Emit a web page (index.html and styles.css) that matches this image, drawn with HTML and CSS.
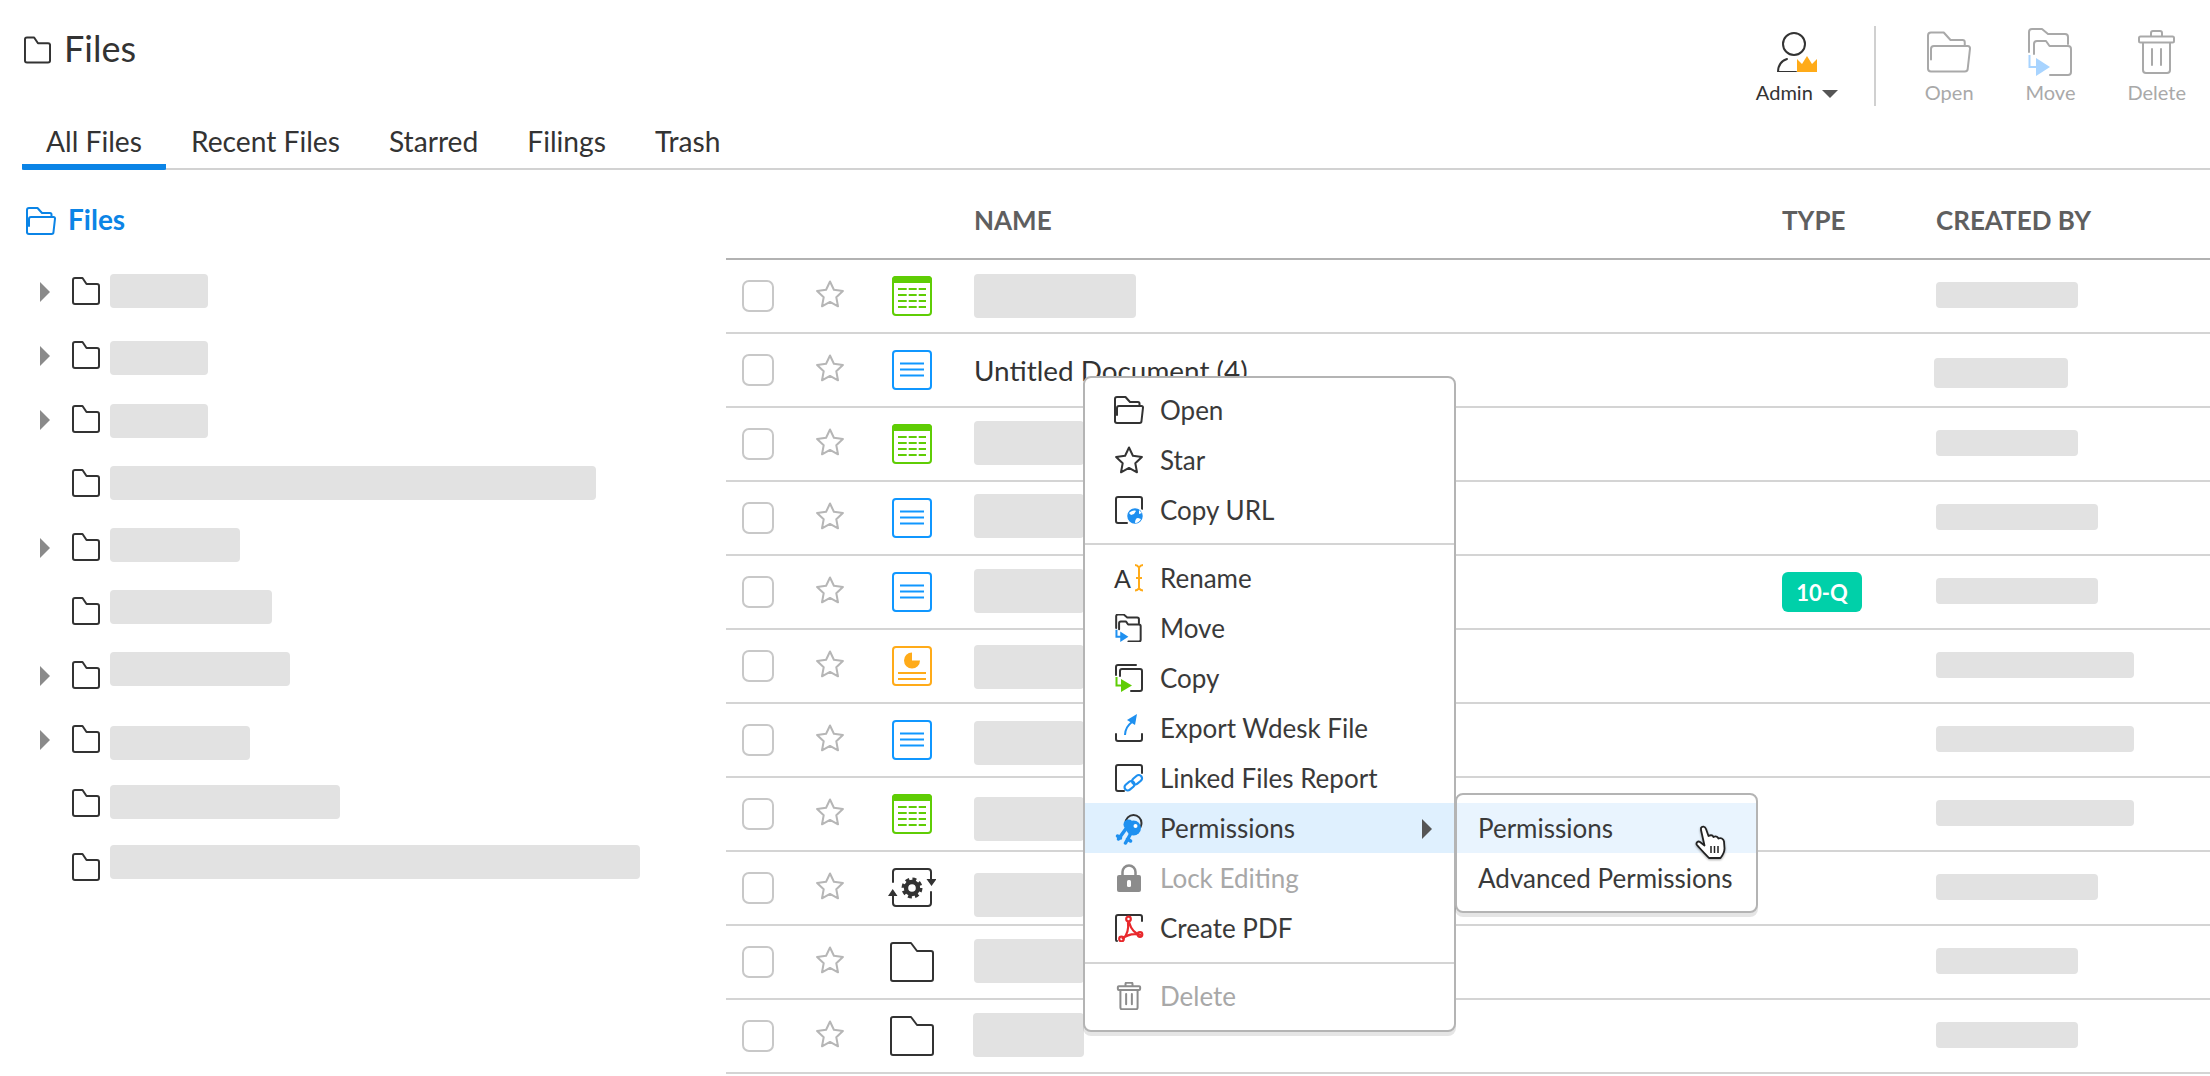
FILE: index.html
```html
<!DOCTYPE html>
<html lang="en">
<head>
<meta charset="utf-8">
<title>Files</title>
<link rel="stylesheet" href="styles.css">
</head>
<body>
<svg class="defs" width="0" height="0" aria-hidden="true">
  <symbol id="i-folder" viewBox="0 0 28 28"><path class="ln" d="M3 1h7.500l4 6H25a2 2 0 0 1 2 2v16a2 2 0 0 1-2 2H3a2 2 0 0 1-2-2V3a2 2 0 0 1 2-2z"/></symbol>
  <symbol id="i-folder-lg" viewBox="0 0 44 40"><path class="ln" d="M3 1h18l6 8h14a2 2 0 0 1 2 2v26a2 2 0 0 1-2 2H3a2 2 0 0 1-2-2V3a2 2 0 0 1 2-2z"/></symbol>
  <symbol id="i-open" viewBox="0 0 30 28"><path class="ln" d="M1 25V3a2 2 0 0 1 2-2h8.500l4.500 5h8a1.500 1.500 0 0 1 1.500 1.500V10"/><path class="ln" d="M3 19v-7a2 2 0 0 1 2-2h22.500a1.500 1.500 0 0 1 1.500 1.700L27.500 25a2 2 0 0 1-2 2H3a2 2 0 0 1-2-2"/></symbol>
  <symbol id="i-star" viewBox="0 0 28 28"><path class="ln" d="M14 1.500l3.900 8.300 9 1.200-6.600 6.300 1.700 9-8-4.400-8 4.400 1.700-9L1.100 11l9-1.200z"/></symbol>
  <symbol id="i-sheet" viewBox="0 0 40 40"><rect class="tint" x="1" y="1" width="38" height="38" rx="3"/><path class="tintfill" d="M4 0h32a4 4 0 0 1 4 4v3H0V4a4 4 0 0 1 4-4z"/><path class="tint" d="M6 13h8.700M16.700 13h8M26.700 13h7.300M6 19h8.700M16.700 19h8M26.700 19h7.300M6 25h8.700M16.700 25h8M26.700 25h7.300M6 31h8.700M16.700 31h8M26.700 31h7.300"/></symbol>
  <symbol id="i-doc" viewBox="0 0 40 40"><rect class="tint" x="1" y="1" width="38" height="38" rx="3"/><path class="tint" d="M8 13.500h24M8 19.500h24M8 25.500h24"/></symbol>
  <symbol id="i-ppt" viewBox="0 0 40 40"><rect class="tint" x="1" y="1" width="38" height="38" rx="3"/><path class="tintfill" d="M20 6.500a8 8 0 1 0 8 8h-8z"/><path class="tint" d="M6 27h28M6 33h28"/></symbol>
  <symbol id="i-sync" viewBox="0 0 48 40"><path class="ln" d="M5 14V4a3 3 0 0 1 3-3h32a3 3 0 0 1 3 3v7"/><path class="ln" d="M43 24v11a3 3 0 0 1-3 3H8a3 3 0 0 1-3-3V28"/><path class="dark" d="M38.500 11h10L43.500 18zM0 28h9.500L4.700 21z"/><circle class="gearteeth" cx="24" cy="20" r="8.500"/><circle class="gearring" cx="24" cy="20" r="6"/></symbol>
  <symbol id="i-admin" viewBox="0 0 40 40"><circle class="ln" cx="17" cy="12" r="11"/><path class="ln" d="M1 40c0-7 3-11 9-13M1 40h18"/><path class="crown" d="M20 40V27l5 5 5-8 5 8 5-5v13z"/></symbol>
  <symbol id="i-move" viewBox="0 0 46 48"><path class="ln" d="M1 24V4a3 3 0 0 1 3-3h10l6 5h17a3 3 0 0 1 3 3v7"/><path class="ln" d="M6 26V16a3 3 0 0 1 3-3h9l3.500 5H40a3 3 0 0 1 3 3v23a3 3 0 0 1-3 3H22"/><path class="accentln" d="M1.500 27v12h8"/><path class="accent" d="M8 30l14 9-14 9z"/></symbol>
  <symbol id="i-trash" viewBox="0 0 37 44"><path class="ln" d="M13 6V3a2 2 0 0 1 2-2h7a2 2 0 0 1 2 2v3"/><rect class="ln" x="1" y="6.500" width="35" height="6" rx="1.500"/><path class="ln" d="M5 13v27a3 3 0 0 0 3 3h21a3 3 0 0 0 3-3V13M14 19v16M23 19v16"/></symbol>
  <symbol id="i-url" viewBox="0 0 28 28"><path class="ln" d="M12 27H3a2 2 0 0 1-2-2V3a2 2 0 0 1 2-2h22a2 2 0 0 1 2 2v10"/><circle class="globe" cx="20" cy="20" r="8.500"/><path class="globe-land" d="M14 17c2-2 5-3 7-2l-2 3-3 1zM20 27c0-3 1-5 3-5l3 1c-1 2-3 4-6 4zM24 14l3 3-3 1z"/></symbol>
  <symbol id="i-copy" viewBox="0 0 28 28"><path class="ln" d="M1 11V3a2 2 0 0 1 2-2h18"/><path class="ln" d="M5 12V7a2 2 0 0 1 2-2h18a2 2 0 0 1 2 2v18a2 2 0 0 1-2 2H16"/><path class="accentln" d="M1.500 13v8.500H8"/><path class="accent" d="M6 15l11 6.500L6 28z"/></symbol>
  <symbol id="i-export" viewBox="0 0 28 28"><path class="ln" d="M1 20v5a2 2 0 0 0 2 2h22a2 2 0 0 0 2-2v-5"/><path class="accentln" d="M10 21c0-6 3-10 7-13"/><path class="accent" d="M12 6l10-6-2 11z"/></symbol>
  <symbol id="i-link" viewBox="0 0 28 28"><path class="ln" d="M9 27H3a2 2 0 0 1-2-2V3a2 2 0 0 1 2-2h22a2 2 0 0 1 2 2v6"/><g class="chain"><rect x="9" y="18.500" width="11" height="6.500" rx="3.200" transform="rotate(-40 14.500 21.700)"/><rect x="16.500" y="12.500" width="11" height="6.500" rx="3.200" transform="rotate(-40 22 15.700)"/></g></symbol>
  <symbol id="i-keys" viewBox="0 0 27 31"><path class="ln" d="M10 9a8 8 0 0 1 16 0c0 2-.5 3-1 4"/><path class="keyline" d="M11 14L3 25M2 22l3 2"/><circle class="keyblue" cx="13" cy="10.500" r="5"/><path class="keyline" d="M15 20l-5 9M12 25l3 2"/><circle class="keyblue" cx="18" cy="14" r="7.500"/><circle class="keyhole" cx="20" cy="12" r="2"/></symbol>
  <symbol id="i-lock" viewBox="0 0 24 28"><path class="lockarc" d="M5.500 13V8a6.500 6.500 0 0 1 13 0v5"/><rect class="lockbody" x="0" y="11" width="24" height="17" rx="2"/><rect class="keyhole" x="10" y="16" width="4" height="7" rx="1.500"/></symbol>
  <symbol id="i-pdf" viewBox="0 0 28 28"><path class="ln" d="M2 27c-.7 0-1-.5-1-1V3a2 2 0 0 1 2-2h22a2 2 0 0 1 2 2v4"/><g class="redline"><path d="M13 8c1 8-1 13-5 17M7 25c6-5 12-6 19-4M26 21c-6-1-10-6-12-13"/><circle cx="13.500" cy="5" r="2.300"/><circle cx="6.500" cy="25" r="2.300"/><circle cx="25" cy="20.500" r="2.300"/></g></symbol>
  <symbol id="i-ibeam" viewBox="0 0 10 28"><path class="cursor-i" d="M1 1c2 0 3 1 4 2.500C6 2 7 1 9 1M5 3.500v21M1 26.500c2 0 3-1 4-2 1 1 2 2 4 2M2 14h6"/></symbol>
</svg>

<header class="topbar">
  <h1 class="title"><svg class="ic-title"><use href="#i-folder"/></svg>Files</h1>
  <div class="actions">
    <div class="action admin">
      <div class="action-icon"><svg class="ic-admin"><use href="#i-admin"/></svg></div>
      <div class="action-label">Admin<span class="caret"></span></div>
    </div>
    <div class="vdiv"></div>
    <div class="action off">
      <div class="action-icon"><svg class="ic-open-lg"><use href="#i-open"/></svg></div>
      <div class="action-label">Open</div>
    </div>
    <div class="action off move-soft">
      <div class="action-icon"><svg class="ic-move-lg"><use href="#i-move"/></svg></div>
      <div class="action-label">Move</div>
    </div>
    <div class="action off">
      <div class="action-icon"><svg class="ic-trash-lg"><use href="#i-trash"/></svg></div>
      <div class="action-label">Delete</div>
    </div>
  </div>
</header>

<nav class="tabs">
  <a class="tab active">All Files</a>
  <a class="tab">Recent Files</a>
  <a class="tab">Starred</a>
  <a class="tab">Filings</a>
  <a class="tab">Trash</a>
</nav>

<main class="main">
  <aside class="tree">
    <div class="tree-head"><svg class="ic-tree-open"><use href="#i-open"/></svg>Files</div>
    <div class="tree-row"><span class="tri"></span><svg class="ic-tree"><use href="#i-folder"/></svg><span class="mask" style="width:98px;margin-top:15px"></span></div>
    <div class="tree-row"><span class="tri"></span><svg class="ic-tree"><use href="#i-folder"/></svg><span class="mask" style="width:98px;margin-top:18px"></span></div>
    <div class="tree-row"><span class="tri"></span><svg class="ic-tree"><use href="#i-folder"/></svg><span class="mask" style="width:98px;margin-top:17px"></span></div>
    <div class="tree-row"><span class="tri blank"></span><svg class="ic-tree"><use href="#i-folder"/></svg><span class="mask" style="width:486px;margin-top:15px"></span></div>
    <div class="tree-row"><span class="tri"></span><svg class="ic-tree"><use href="#i-folder"/></svg><span class="mask" style="width:130px;margin-top:13px"></span></div>
    <div class="tree-row"><span class="tri blank"></span><svg class="ic-tree"><use href="#i-folder"/></svg><span class="mask" style="width:162px;margin-top:11px"></span></div>
    <div class="tree-row"><span class="tri"></span><svg class="ic-tree"><use href="#i-folder"/></svg><span class="mask" style="width:180px;margin-top:9px"></span></div>
    <div class="tree-row"><span class="tri"></span><svg class="ic-tree"><use href="#i-folder"/></svg><span class="mask" style="width:140px;margin-top:19px"></span></div>
    <div class="tree-row"><span class="tri blank"></span><svg class="ic-tree"><use href="#i-folder"/></svg><span class="mask" style="width:230px;margin-top:14px"></span></div>
    <div class="tree-row"><span class="tri blank"></span><svg class="ic-tree"><use href="#i-folder"/></svg><span class="mask" style="width:530px;margin-top:10px"></span></div>
  </aside>

  <section class="table">
    <div class="thead">
      <span></span><span></span><span></span>
      <span>NAME</span><span>TYPE</span><span>CREATED BY</span>
    </div>

    <div class="row">
      <span class="check"></span><svg class="star"><use href="#i-star"/></svg><svg class="file sheet"><use href="#i-sheet"/></svg>
      <span class="cell-name"><span class="mask name" style="width:162px"></span></span><span></span>
      <span class="mask by" style="width:142px"></span>
    </div>
    <div class="row">
      <span class="check"></span><svg class="star"><use href="#i-star"/></svg><svg class="file doc"><use href="#i-doc"/></svg>
      <span class="cell-name"><span class="name-text">Untitled Document (4)</span></span><span></span>
      <span class="mask by by-alt" style="width:134px"></span>
    </div>
    <div class="row">
      <span class="check"></span><svg class="star"><use href="#i-star"/></svg><svg class="file sheet"><use href="#i-sheet"/></svg>
      <span class="cell-name"><span class="mask name" style="width:110px;margin-top:-2px"></span></span><span></span>
      <span class="mask by" style="width:142px"></span>
    </div>
    <div class="row">
      <span class="check"></span><svg class="star"><use href="#i-star"/></svg><svg class="file doc"><use href="#i-doc"/></svg>
      <span class="cell-name"><span class="mask name" style="width:110px;margin-top:-4px"></span></span><span></span>
      <span class="mask by" style="width:162px"></span>
    </div>
    <div class="row">
      <span class="check"></span><svg class="star"><use href="#i-star"/></svg><svg class="file doc"><use href="#i-doc"/></svg>
      <span class="cell-name"><span class="mask name" style="width:110px;margin-top:-2px"></span></span><span class="badge">10-Q</span>
      <span class="mask by" style="width:162px"></span>
    </div>
    <div class="row">
      <span class="check"></span><svg class="star"><use href="#i-star"/></svg><svg class="file ppt"><use href="#i-ppt"/></svg>
      <span class="cell-name"><span class="mask name" style="width:110px;margin-top:2px"></span></span><span></span>
      <span class="mask by" style="width:198px"></span>
    </div>
    <div class="row">
      <span class="check"></span><svg class="star"><use href="#i-star"/></svg><svg class="file doc"><use href="#i-doc"/></svg>
      <span class="cell-name"><span class="mask name" style="width:110px;margin-top:6px"></span></span><span></span>
      <span class="mask by" style="width:198px"></span>
    </div>
    <div class="row">
      <span class="check"></span><svg class="star"><use href="#i-star"/></svg><svg class="file sheet"><use href="#i-sheet"/></svg>
      <span class="cell-name"><span class="mask name" style="width:110px;margin-top:10px"></span></span><span></span>
      <span class="mask by" style="width:198px"></span>
    </div>
    <div class="row">
      <span class="check"></span><svg class="star"><use href="#i-star"/></svg><svg class="file sync"><use href="#i-sync"/></svg>
      <span class="cell-name"><span class="mask name" style="width:110px;margin-top:14px"></span></span><span></span>
      <span class="mask by" style="width:162px"></span>
    </div>
    <div class="row">
      <span class="check"></span><svg class="star"><use href="#i-star"/></svg><svg class="file folder-lg"><use href="#i-folder-lg"/></svg>
      <span class="cell-name"><span class="mask name" style="width:110px;margin-top:-2px"></span></span><span></span>
      <span class="mask by" style="width:142px"></span>
    </div>
    <div class="row last">
      <span class="check"></span><svg class="star"><use href="#i-star"/></svg><svg class="file folder-lg"><use href="#i-folder-lg"/></svg>
      <span class="cell-name"><span class="mask name name-shift" style="width:111px;margin-top:-2px"></span></span><span></span>
      <span class="mask by" style="width:142px"></span>
    </div>
  </section>
</main>

<div class="menu">
  <div class="mi"><svg class="mic"><use href="#i-open"/></svg>Open</div>
  <div class="mi"><svg class="mic"><use href="#i-star"/></svg>Star</div>
  <div class="mi"><svg class="mic blue"><use href="#i-url"/></svg>Copy URL</div>
  <div class="msep"></div>
  <div class="mi"><span class="mic rename"><span class="rename-a">A</span><svg class="ibeam"><use href="#i-ibeam"/></svg></span>Rename</div>
  <div class="mi"><svg class="mic blue"><use href="#i-move"/></svg>Move</div>
  <div class="mi"><svg class="mic green"><use href="#i-copy"/></svg>Copy</div>
  <div class="mi"><svg class="mic blue"><use href="#i-export"/></svg>Export Wdesk File</div>
  <div class="mi"><svg class="mic blue"><use href="#i-link"/></svg>Linked Files Report</div>
  <div class="mi hot"><svg class="mic keys"><use href="#i-keys"/></svg>Permissions<span class="tri-right"></span>
    <div class="submenu">
      <div class="smi hot2">Permissions<svg class="hand" viewBox="0 0 31 34"><path class="hand-fill" d="M6 3c1-2 4-2 5 1l2.500 7c2-1 4-1 5 1 2-1 4-.5 5 1.500 2-1 5 0 5.500 3l.5 7c0 4-2 7-4 9.500H14c-3-3.500-8-8-12-13-1.500-2 1-4.500 3-3l4.500 3.500L6 5z"/><path class="hand-line" d="M16 21v7M19.500 21v7M23 21v7"/></svg></div>
      <div class="smi">Advanced Permissions</div>
    </div>
  </div>
  <div class="mi dim"><svg class="mic lock"><use href="#i-lock"/></svg>Lock Editing</div>
  <div class="mi"><svg class="mic"><use href="#i-pdf"/></svg>Create PDF</div>
  <div class="msep sep2"></div>
  <div class="mi dim"><svg class="mic gray"><use href="#i-trash"/></svg>Delete</div>
</div>
</body>
</html>
```

FILE: styles.css
```css
* { box-sizing: border-box; }
html, body { margin: 0; height: 100%; }
body {
  position: relative;
  width: 2210px;
  height: 1076px;
  overflow: hidden;
  background: #fff;
  color: #333;
  font-family: Lato, "Open Sans", sans-serif;
}
.defs { position: absolute; }

/* icon parts */
.ln { fill: none; stroke: currentColor; stroke-width: 2; stroke-linejoin: round; stroke-linecap: round; vector-effect: non-scaling-stroke; }
.tint { fill: none; stroke: var(--tint); stroke-width: 2; }
.tintfill { fill: var(--tint); }
.dark { fill: #333; }
.gearteeth { fill: none; stroke: #333; stroke-width: 4; stroke-dasharray: 3.700 3; }
.gearring { fill: none; stroke: #333; stroke-width: 4.400; }
.crown { fill: #ffab19; }
.accent { fill: var(--accent, #1e90f0); }
.accentln { fill: none; stroke: var(--accent, #1e90f0); stroke-width: 2; vector-effect: non-scaling-stroke; }
.globe { fill: #1e8ff0; stroke: #fff; stroke-width: 1.500; }
.globe-land { fill: #fff; }
.cursor-i { fill: none; stroke: #ffab19; stroke-width: 2; }
.chain { fill: none; stroke: #1e90f0; stroke-width: 2.200; }
.keyblue { fill: #1e90f0; }
.keyhole { fill: #fff; }
.keyline { fill: none; stroke: #1e90f0; stroke-width: 3.500; stroke-linecap: round; }
.lockarc { fill: none; stroke: #8c8c8c; stroke-width: 2.500; }
.lockbody { fill: #8c8c8c; }
.redline { fill: none; stroke: #e8282c; stroke-width: 2.200; }

/* top bar */
.topbar { display: flex; justify-content: space-between; height: 120px; padding: 26px 24px 0; }
.title {
  display: flex;
  align-items: center;
  height: 44px;
  margin: 0;
  font-size: 36px;
  font-weight: 400;
  color: #333;
}
.ic-title { width: 27px; height: 28px; margin: 4px 13px 0 0; color: #333; }
.actions { display: flex; align-items: flex-start; }
.action { display: flex; flex-direction: column; align-items: center; color: #333; }
.action.off { color: #a9a9a9; margin-left: 52px; }
.vdiv + .action.off { margin-left: 49px; }
.action-icon { display: flex; align-items: center; justify-content: center; height: 52px; }
.action-label { display: flex; align-items: center; height: 28px; font-size: 20px; line-height: 28px; white-space: nowrap; }
.caret {
  width: 0; height: 0;
  margin: 4px 0 0 9px;
  border-left: 8px solid transparent;
  border-right: 8px solid transparent;
  border-top: 8px solid #555;
}
.vdiv { width: 2px; height: 80px; margin-left: 36px; background: #d0d0d0; }
.ic-admin { width: 40px; height: 40px; }
.ic-open-lg { width: 48px; height: 42px; }
.ic-move-lg { width: 46px; height: 48px; }
.ic-trash-lg { width: 37px; height: 44px; }
.off .ln { stroke-width: 2.400; }
.move-soft { --accent: #a8d4ff; }

/* tabs */
.tabs { display: flex; gap: 1px; height: 50px; margin-left: 22px; border-bottom: 2px solid #d2d2d2; }
.tab {
  position: relative;
  height: 50px;
  padding: 0 24px;
  font-size: 28.200px;
  line-height: 42px;
  color: #333;
  white-space: nowrap;
}
.tab.active { border-bottom: 6px solid #0b84e6; border-radius: 0 0 2px 2px / 0 0 1px 1px; }

/* layout */
.main { display: flex; }
.tree { flex: 0 0 726px; }
.table { flex: 1; }

/* tree */
.tree-head {
  display: flex;
  align-items: center;
  height: 89px;
  padding: 8px 0 0 26px;
  font-size: 28px;
  font-weight: 700;
  color: #0b84e6;
}
.ic-tree-open { width: 30px; height: 28px; margin: 4px 12px 0 0; }
.tree-row { display: flex; align-items: center; height: 64px; padding-left: 40px; }
.tri {
  width: 0; height: 0;
  margin-right: 22px;
  margin-top: 2px;
  border-top: 10px solid transparent;
  border-bottom: 10px solid transparent;
  border-left: 10px solid #8a8a8a;
}
.tri.blank { border-left-color: transparent; }
.ic-tree { flex: none; width: 28px; height: 28px; margin-right: 10px; color: #333; }
.mask { display: block; height: 34px; flex: none; border-radius: 4px; background: #e2e2e2; }
.tree-row .mask { align-self: flex-start; }

/* table */
.thead, .row {
  display: grid;
  grid-template-columns: 90px 74px 84px 808px 154px 1fr;
  align-items: center;
}
.thead {
  height: 90px;
  padding: 12px 0 0;
  border-bottom: 2px solid #b2b2b2;
  font-size: 26px;
  font-weight: 700;
  color: #5f5f5f;
}
.row { height: 74px; border-bottom: 2px solid #d4d4d4; }
.check { width: 32px; height: 32px; margin-left: 16px; border: 2px solid #c8c8c8; border-radius: 7px; }
.star { width: 28px; height: 28px; margin-top: -5px; color: #b6b6b6; }
.file { width: 40px; height: 40px; margin-left: 2px; color: #333; }
.file.sync { width: 48px; margin-left: -2px; }
.file.folder-lg { width: 44px; margin-left: 0; }
.sheet { --tint: #5fcd05; }
.doc { --tint: #1097ff; }
.ppt { --tint: #ffab19; }
.cell-name { display: flex; align-items: center; }
.mask.name { height: 44px; }
.name-shift { margin-left: -1px; }
.name-text { font-size: 27.900px; color: #333; white-space: nowrap; }
.badge {
  display: flex;
  align-items: center;
  justify-content: center;
  width: 80px;
  height: 40px;
  border-radius: 6px;
  background: #00d0a9;
  color: #fff;
  font-size: 22px;
  font-weight: 700;
}
.mask.by { height: 26px; margin-top: -2px; }
.mask.by-alt { height: 30px; margin: 6px 0 0 -2px; }

/* context menu */
.menu {
  position: absolute;
  left: 1083px;
  top: 376px;
  width: 373px;
  padding: 7px 0 9px;
  border: 2px solid #b4b4b4;
  border-radius: 8px;
  background: #fff;
  box-shadow: 0 4px 0 rgba(0, 0, 0, .1);
  font-size: 26px;
  color: #3a3a3a;
}
.mi {
  position: relative;
  display: flex;
  align-items: center;
  height: 50px;
  padding-left: 29px;
  white-space: nowrap;
}
.mic { flex: none; width: 30px; height: 28px; margin-right: 16px; color: #333; }
.mic.blue { --accent: #1e90f0; }
.mic.green { --accent: #5fcd05; }
.mic.gray { color: #8c8c8c; }
.mic.keys { height: 31px; margin-top: 2px; }
.rename { display: flex; align-items: center; justify-content: space-between; }
.rename-a { font-size: 25px; line-height: 28px; color: #333; }
.ibeam { width: 10px; height: 28px; }
.msep { height: 2px; margin: 8px 0; background: #d4d4d4; }
.sep2 { margin: 9px 0 7px; }
.hot { background: #dff0fe; }
.dim { color: #a8a8a8; }
.tri-right {
  position: absolute;
  right: 22px;
  top: 16px;
  width: 0; height: 0;
  border-top: 10px solid transparent;
  border-bottom: 10px solid transparent;
  border-left: 10px solid #555;
}
.submenu {
  position: absolute;
  left: calc(100% + 1px);
  top: -10px;
  width: 303px;
  padding: 8px 0;
  border: 2px solid #b4b4b4;
  border-radius: 8px;
  background: #fff;
  box-shadow: 0 4px 0 rgba(0, 0, 0, .1);
}
.smi { position: relative; display: flex; align-items: center; height: 50px; padding-left: 21px; }
.hot2 { background: #e9f4fe; }
.hand { position: absolute; left: 238px; top: 22px; width: 31px; height: 34px; filter: drop-shadow(0 1px 1px rgba(0,0,0,.35)); }
.hand-fill { fill: #fff; stroke: #222; stroke-width: 1.800; stroke-linejoin: round; }
.hand-line { fill: none; stroke: #222; stroke-width: 1.500; }
```
